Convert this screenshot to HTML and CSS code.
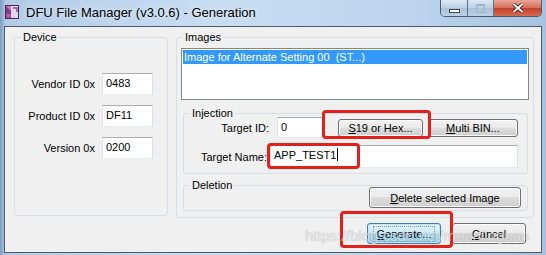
FILE: index.html
```html
<!DOCTYPE html>
<html lang="en">

<head>
    <meta charset="utf-8">
    <title>DFU File Manager (v3.0.6) - Generation</title>
    <link rel="stylesheet" href="styles.css">
</head>

<body>
    <div class="window">
        <!-- Title bar -->
        <div class="titlebar">
            <svg class="app-icon" viewBox="0 0 14 14">
                <rect x="1" y="1" width="12" height="12" fill="#7b3f8e" />
                <rect x="6" y="1" width="7" height="12" fill="#e6d6ec" />
                <path d="M1 1 L6 1 L6 6 Z" fill="#d77ab8" />
                <path d="M8 3 L12 3 L12 7" stroke="#8e4d9e" stroke-width="1.5" fill="none" />
                <rect x="1.5" y="9" width="4" height="3.5" fill="#c45c9f" />
                <rect x="0.5" y="0.5" width="13" height="13" fill="none" stroke="#4b2a5a" />
            </svg>
            <span class="title">DFU File Manager (v3.0.6) - Generation</span>
            <div class="caption-buttons">
                <span class="cap-btn cap-min"><i></i></span>
                <span class="cap-btn cap-max"><i></i></span>
                <span class="cap-btn cap-close">
                    <svg viewBox="0 0 12 10">
                        <path d="M1.5 1 L10.5 9 M10.5 1 L1.5 9" stroke="#3a1a14" stroke-width="3.6" />
                        <path d="M1.5 1 L10.5 9 M10.5 1 L1.5 9" stroke="#fff" stroke-width="2" />
                    </svg>
                </span>
            </div>
        </div>

        <!-- Dialog body -->
        <div class="client">
            <div class="groups">
                <fieldset class="group group-device">
                    <legend>Device</legend>
                    <div class="device-grid">
                        <label>Vendor ID 0x</label>
                        <div class="textbox">0483</div>
                        <label>Product ID 0x</label>
                        <div class="textbox">DF11</div>
                        <label>Version 0x</label>
                        <div class="textbox">0200</div>
                    </div>
                </fieldset>

                <fieldset class="group group-images">
                    <legend>Images</legend>
                    <div class="listbox">
                        <div class="list-item selected">Image for Alternate Setting 00 &nbsp;(ST...)</div>
                    </div>

                    <fieldset class="group group-injection">
                        <legend>Injection</legend>
                        <div class="row row-id">
                            <label class="label-id">Target ID:</label>
                            <div class="textbox textbox-id">0</div>
                            <button class="btn btn-s19"><u>S</u>19 or Hex...</button>
                            <button class="btn btn-multi"><u>M</u>ulti BIN...</button>
                        </div>
                        <div class="row row-name">
                            <label class="label-name">Target Name:</label>
                            <div class="textbox textbox-name">APP_TEST1<span class="caret"></span></div>
                        </div>
                    </fieldset>

                    <fieldset class="group group-deletion">
                        <legend>Deletion</legend>
                        <div class="row row-delete">
                            <button class="btn btn-delete"><u>D</u>elete selected Image</button>
                        </div>
                    </fieldset>
                </fieldset>
            </div>

            <div class="dialog-buttons">
                <button class="btn btn-default"><span class="focus-ring"><u>G</u>enerate...</span></button>
                <button class="btn"><u>C</u>ancel</button>
            </div>
        </div>

        <!-- Red annotation boxes drawn over the screenshot -->
        <div class="mark mark-s19"></div>
        <div class="mark mark-name"></div>
        <div class="mark mark-generate"></div>

        <div class="watermark">https://blog.csdn.net/moonlinguan</div>
    </div>
</body>

</html>
```

FILE: styles.css
```css
body {
    margin: 0;
    width: 546px;
    height: 255px;
    overflow: hidden;
    font-family: "Liberation Sans", Arial, sans-serif;
    font-size: 11px;
    color: #000;
}

.window {
    position: relative;
    display: flex;
    flex-direction: column;
    height: 255px;
    background: linear-gradient(90deg, #7f9dc0 0, #b2cce7 6px, #c7ddf2 40%, #bdd5ed 75%, #a6c2e0 100%);
}

/* Title bar */
.titlebar {
    height: 26px;
    flex-shrink: 0;
    display: flex;
    align-items: flex-start;
}

.app-icon {
    width: 14px;
    height: 14px;
    margin: 5px 0 0 5px;
}

.title {
    margin: 4px 0 0 7px;
    font-size: 13px;
    line-height: 17px;
    text-shadow: 0 0 6px rgba(255, 255, 255, 0.9);
}

.caption-buttons {
    display: flex;
    margin-left: auto;
    margin-right: 4px;
    height: 16px;
    border: 1px solid #4c5c70;
    border-top: none;
    border-radius: 0 0 5px 5px;
    overflow: hidden;
}

.cap-btn {
    display: flex;
    align-items: center;
    justify-content: center;
    box-sizing: border-box;
}

.cap-min,
.cap-max {
    background: linear-gradient(#dce8f4, #bccfe3 50%, #a9c0d9 50%, #bcd1e6);
    border-right: 1px solid #5f7086;
}

.cap-min {
    width: 27px;
}

.cap-max {
    width: 26px;
}

.cap-min i {
    display: block;
    width: 9px;
    height: 2px;
    margin-top: 5px;
    background: #fff;
    border: 1px solid #39465a;
}

.cap-max i {
    display: block;
    width: 7px;
    height: 6px;
    border: 1px solid #9fb3c9;
    border-top-width: 2px;
}

.cap-close {
    width: 47px;
    background: linear-gradient(#e9a898, #d56d58 50%, #c43f2b 50%, #d66a52);
}

.cap-close svg {
    width: 12px;
    height: 10px;
}

/* Dialog client area */
.client {
    flex: 1;
    margin: 0 4px 2px;
    border: 1px solid #4e5b68;
    background: #f0f0f0;
    padding: 4px 7px 0 9px;
}

.groups {
    display: grid;
    grid-template-columns: 154px 358px;
    column-gap: 8px;
    align-items: start;
}

.group {
    margin: 0;
    padding: 0;
    min-width: 0;
    box-sizing: border-box;
    border: 1px solid #d5dfe5;
    border-radius: 3px;
}

.group legend {
    margin-left: 6px;
    padding: 0 2px;
    line-height: 12px;
}

.group-device {
    height: 185px;
}

.device-grid {
    display: grid;
    grid-template-columns: auto 51px;
    column-gap: 7px;
    row-gap: 10px;
    justify-content: end;
    align-items: center;
    padding: 30px 14px 0 0;
}

.device-grid label {
    text-align: right;
}

.textbox {
    box-sizing: border-box;
    height: 22px;
    padding: 0 3px;
    line-height: 18px;
    background: #fff;
    border: 1px solid;
    border-color: #abadb3 #dbdfe6 #e3e9ef #e2e3ea;
    white-space: nowrap;
}

.caret {
    display: inline-block;
    width: 1px;
    height: 13px;
    margin-left: 1px;
    vertical-align: -2px;
    background: #000;
}

.listbox {
    height: 52px;
    margin: 5px 4px 0;
    padding: 1px;
    box-sizing: border-box;
    background: #fff;
    border: 1px solid #828790;
}

.list-item {
    height: 14px;
    line-height: 14px;
    padding-left: 1px;
    white-space: nowrap;
}

.list-item.selected {
    background: #3399ff;
    color: #fff;
}

.group-injection {
    margin: 7px 5px 0 6px;
}

.row {
    display: flex;
    align-items: center;
}

.row-id {
    margin-top: -2px;
    height: 21px;
}

.row-id .textbox {
    height: 21px;
}

.label-id {
    width: 85px;
    text-align: right;
}

.textbox-id {
    width: 46px;
    margin-left: 8px;
}

.row-name {
    margin: 7px 0 5px;
}

.label-name {
    width: 83px;
    text-align: right;
}

.textbox-name {
    width: 248px;
    height: 23px;
    line-height: 19px;
    margin-left: 3px;
}

.group-deletion {
    margin: 5px 5px 6px 6px;
}

.row-delete {
    justify-content: flex-end;
    margin: -4px 6px 2px 0;
}

/* Push buttons */
.btn {
    box-sizing: border-box;
    height: 21px;
    padding: 0;
    font: inherit;
    color: #000;
    border: 1px solid #707070;
    border-radius: 3px;
    background: linear-gradient(#f2f2f2, #ebebeb 45%, #dddddd 50%, #cfcfcf);
    box-shadow: inset 0 0 0 1px #fcfcfc;
}

.btn-s19 {
    width: 85px;
    height: 18px;
    margin-left: 15px;
}

.btn-multi {
    width: 90px;
    height: 18px;
    margin-left: 5px;
}

.btn-delete {
    width: 152px;
}

.dialog-buttons {
    display: flex;
    justify-content: flex-end;
    gap: 11px;
    margin-top: 5px;
    padding-right: 8px;
}

.dialog-buttons .btn {
    width: 74px;
}

.btn-default {
    border-color: #3c7fb1;
    background: linear-gradient(#e5f4fc, #cfeaf9 45%, #a9dbf6 50%, #8fd0f1);
    box-shadow: inset 0 0 0 1px #bfe6fa;
}

.focus-ring {
    padding: 0 1px;
    outline: 1px dotted #8a9aa6;
    outline-offset: 1px;
}

/* Annotations over the screenshot */
.mark {
    position: absolute;
    box-sizing: border-box;
    border: 3px solid #e3201b;
    border-radius: 4px;
}

.mark-s19 {
    left: 322px;
    top: 110px;
    width: 109px;
    height: 29px;
}

.mark-name {
    left: 267px;
    top: 143px;
    width: 93px;
    height: 26px;
}

.mark-generate {
    left: 340px;
    top: 211px;
    width: 113px;
    height: 37px;
}

.watermark {
    position: absolute;
    left: 305px;
    top: 227px;
    font-size: 15px;
    white-space: nowrap;
    color: rgba(255, 255, 255, 0.7);
    text-shadow: 0 0 1px rgba(0, 0, 0, 0.35);
}
```
